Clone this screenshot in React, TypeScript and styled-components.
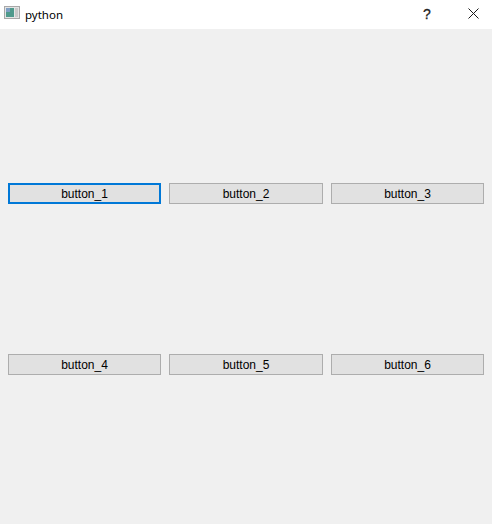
import React from 'react';
import styled, { createGlobalStyle } from 'styled-components';

const GlobalStyle = createGlobalStyle`
  html, body {
    margin: 0;
    padding: 0;
    background: #f0f0f0;
  }
`;

const Window = styled.div`
  display: flex;
  flex-direction: column;
  width: 492px;
  height: 524px;
  overflow: hidden;
  background: #f0f0f0;
  font-family: 'Liberation Sans', Arial, sans-serif;
`;

const TitleBar = styled.header`
  display: flex;
  align-items: center;
  height: 29px;
  flex-shrink: 0;
  background: #ffffff;
`;

const AppIcon = styled.svg`
  width: 16px;
  height: 16px;
  margin-left: 4px;
  margin-top: -3px;
`;

const Title = styled.span`
  margin-left: 5px;
  margin-top: -1px;
  font-family: 'Noto Sans', 'Liberation Sans', sans-serif;
  font-size: 11.5px;
  color: #000000;
`;

const TitleButtons = styled.div`
  display: flex;
  gap: 8px;
  margin-left: auto;
  margin-top: -3px;
`;

const HelpButton = styled.div`
  width: 38px;
  height: 26px;
  text-align: center;
  font-size: 14px;
  line-height: 28px;
  font-weight: 400;
  -webkit-text-stroke: 0.3px #222222;
  color: #222222;
`;

const CloseButton = styled.div`
  display: flex;
  align-items: center;
  justify-content: center;
  width: 38px;
  height: 26px;
`;

const Content = styled.main`
  display: flex;
  flex-direction: column;
  gap: 150px;
  padding: 154px 8px 0;
`;

const ButtonRow = styled.div`
  display: grid;
  grid-template-columns: 153px 154px 153px;
  gap: 8px;
`;

const PushButton = styled.button<{ $focused?: boolean }>`
  box-sizing: border-box;
  height: 21px;
  padding: 2px 0 0;
  margin: 0;
  background: #e1e1e1;
  border: ${({ $focused }) => ($focused ? '2px solid #0078d7' : '1px solid #adadad')};
  border-radius: 0;
  outline: none;
  font-family: 'Liberation Sans', Arial, sans-serif;
  font-size: 12px;
  line-height: 15px;
  color: #000000;
`;

const rows = [
  ['button_1', 'button_2', 'button_3'],
  ['button_4', 'button_5', 'button_6'],
];

const App = () => {
  return (
    <Window>
      <GlobalStyle />
      <TitleBar>
        <AppIcon viewBox='0 0 16 16'>
          <rect x='0.5' y='1.5' width='15' height='12' fill='#e4e4e4' stroke='#a8a8a8' />
          <rect x='2' y='3' width='8' height='9' fill='#4f9a8c' />
          <rect x='2' y='3' width='4' height='4' fill='#7f9fc4' />
          <rect x='11' y='3' width='3' height='9' fill='#c9c9c9' />
        </AppIcon>
        <Title>python</Title>
        <TitleButtons>
          <HelpButton>?</HelpButton>
          <CloseButton>
            <svg width='11' height='11' viewBox='0 0 11 11'>
              <path d='M0.5 0.5 L10.5 10.5 M10.5 0.5 L0.5 10.5' stroke='#1a1a1a' strokeWidth='1' fill='none' />
            </svg>
          </CloseButton>
        </TitleButtons>
      </TitleBar>
      <Content>
        {rows.map((row) => (
          <ButtonRow key={row[0]}>
            {row.map((label) => (
              <PushButton key={label} $focused={label === 'button_1'}>
                {label}
              </PushButton>
            ))}
          </ButtonRow>
        ))}
      </Content>
    </Window>
  );
};

export default App;
